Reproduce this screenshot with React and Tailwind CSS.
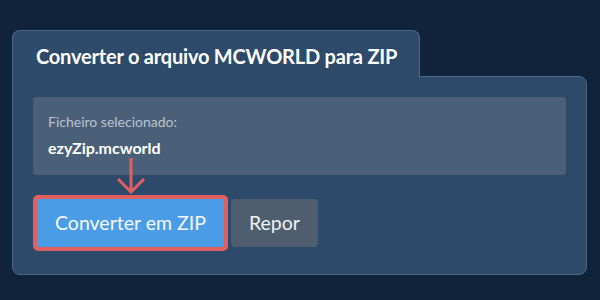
export default function App() {
  return (
    <div
      className="w-[600px] h-[300px] bg-[#10233a] pt-[30px] px-[12px] overflow-hidden"
      style={{ fontFamily: 'Lato, "Noto Sans", sans-serif' }}
    >
      <div className="w-[575px]">
        {/* Tab */}
        <div className="w-[408px] bg-[#2d4a6b] border border-b-0 border-[#4a6a8c] rounded-t-[8px] pt-[11px] pb-[7px] px-[23px] relative z-10 -mb-px">
          <h2 className="text-[20px] leading-[28px] font-bold text-white whitespace-nowrap tracking-[-0.2px]">
            Converter o arquivo MCWORLD para ZIP
          </h2>
        </div>

        {/* Body */}
        <div className="bg-[#2d4a6b] border border-[#4a6a8c] rounded-b-[8px] rounded-tr-[8px] pt-[20px] px-[20px] pb-[23px] relative">
          <div className="bg-[#4a6079] rounded-[4px] p-[15px] flex flex-col gap-[4px]">
            <div className="text-[14px] leading-[20px] text-[#b9c3cd]">Ficheiro selecionado:</div>
            <div className="text-[16px] leading-[24px] font-bold text-white">ezyZip.mcworld</div>
          </div>

          <div className="mt-[20px] flex items-center">
            <div className="border-4 border-[#e06060] rounded-[5px]">
              <button className="h-[48px] px-[18px] bg-[#4b9ce6] text-[19.5px] text-[#f4f8fc] leading-none">
                Converter em ZIP
              </button>
            </div>
            <button className="ml-[3px] h-[48px] px-[18px] bg-[#4e5e6e] rounded-[4px] text-[19.5px] text-[#f0f3f6] leading-none">
              Repor
            </button>
          </div>

          {/* Arrow pointing to the convert button */}
          <svg
            className="absolute left-[104px] top-[81px]"
            width="30"
            height="36"
            viewBox="0 0 30 36"
            fill="none"
            stroke="#e06060"
            strokeWidth="3"
          >
            <line x1="14" y1="0" x2="14" y2="34" />
            <polyline points="1,21 14,34 27,21" />
          </svg>
        </div>
      </div>
    </div>
  )
}
